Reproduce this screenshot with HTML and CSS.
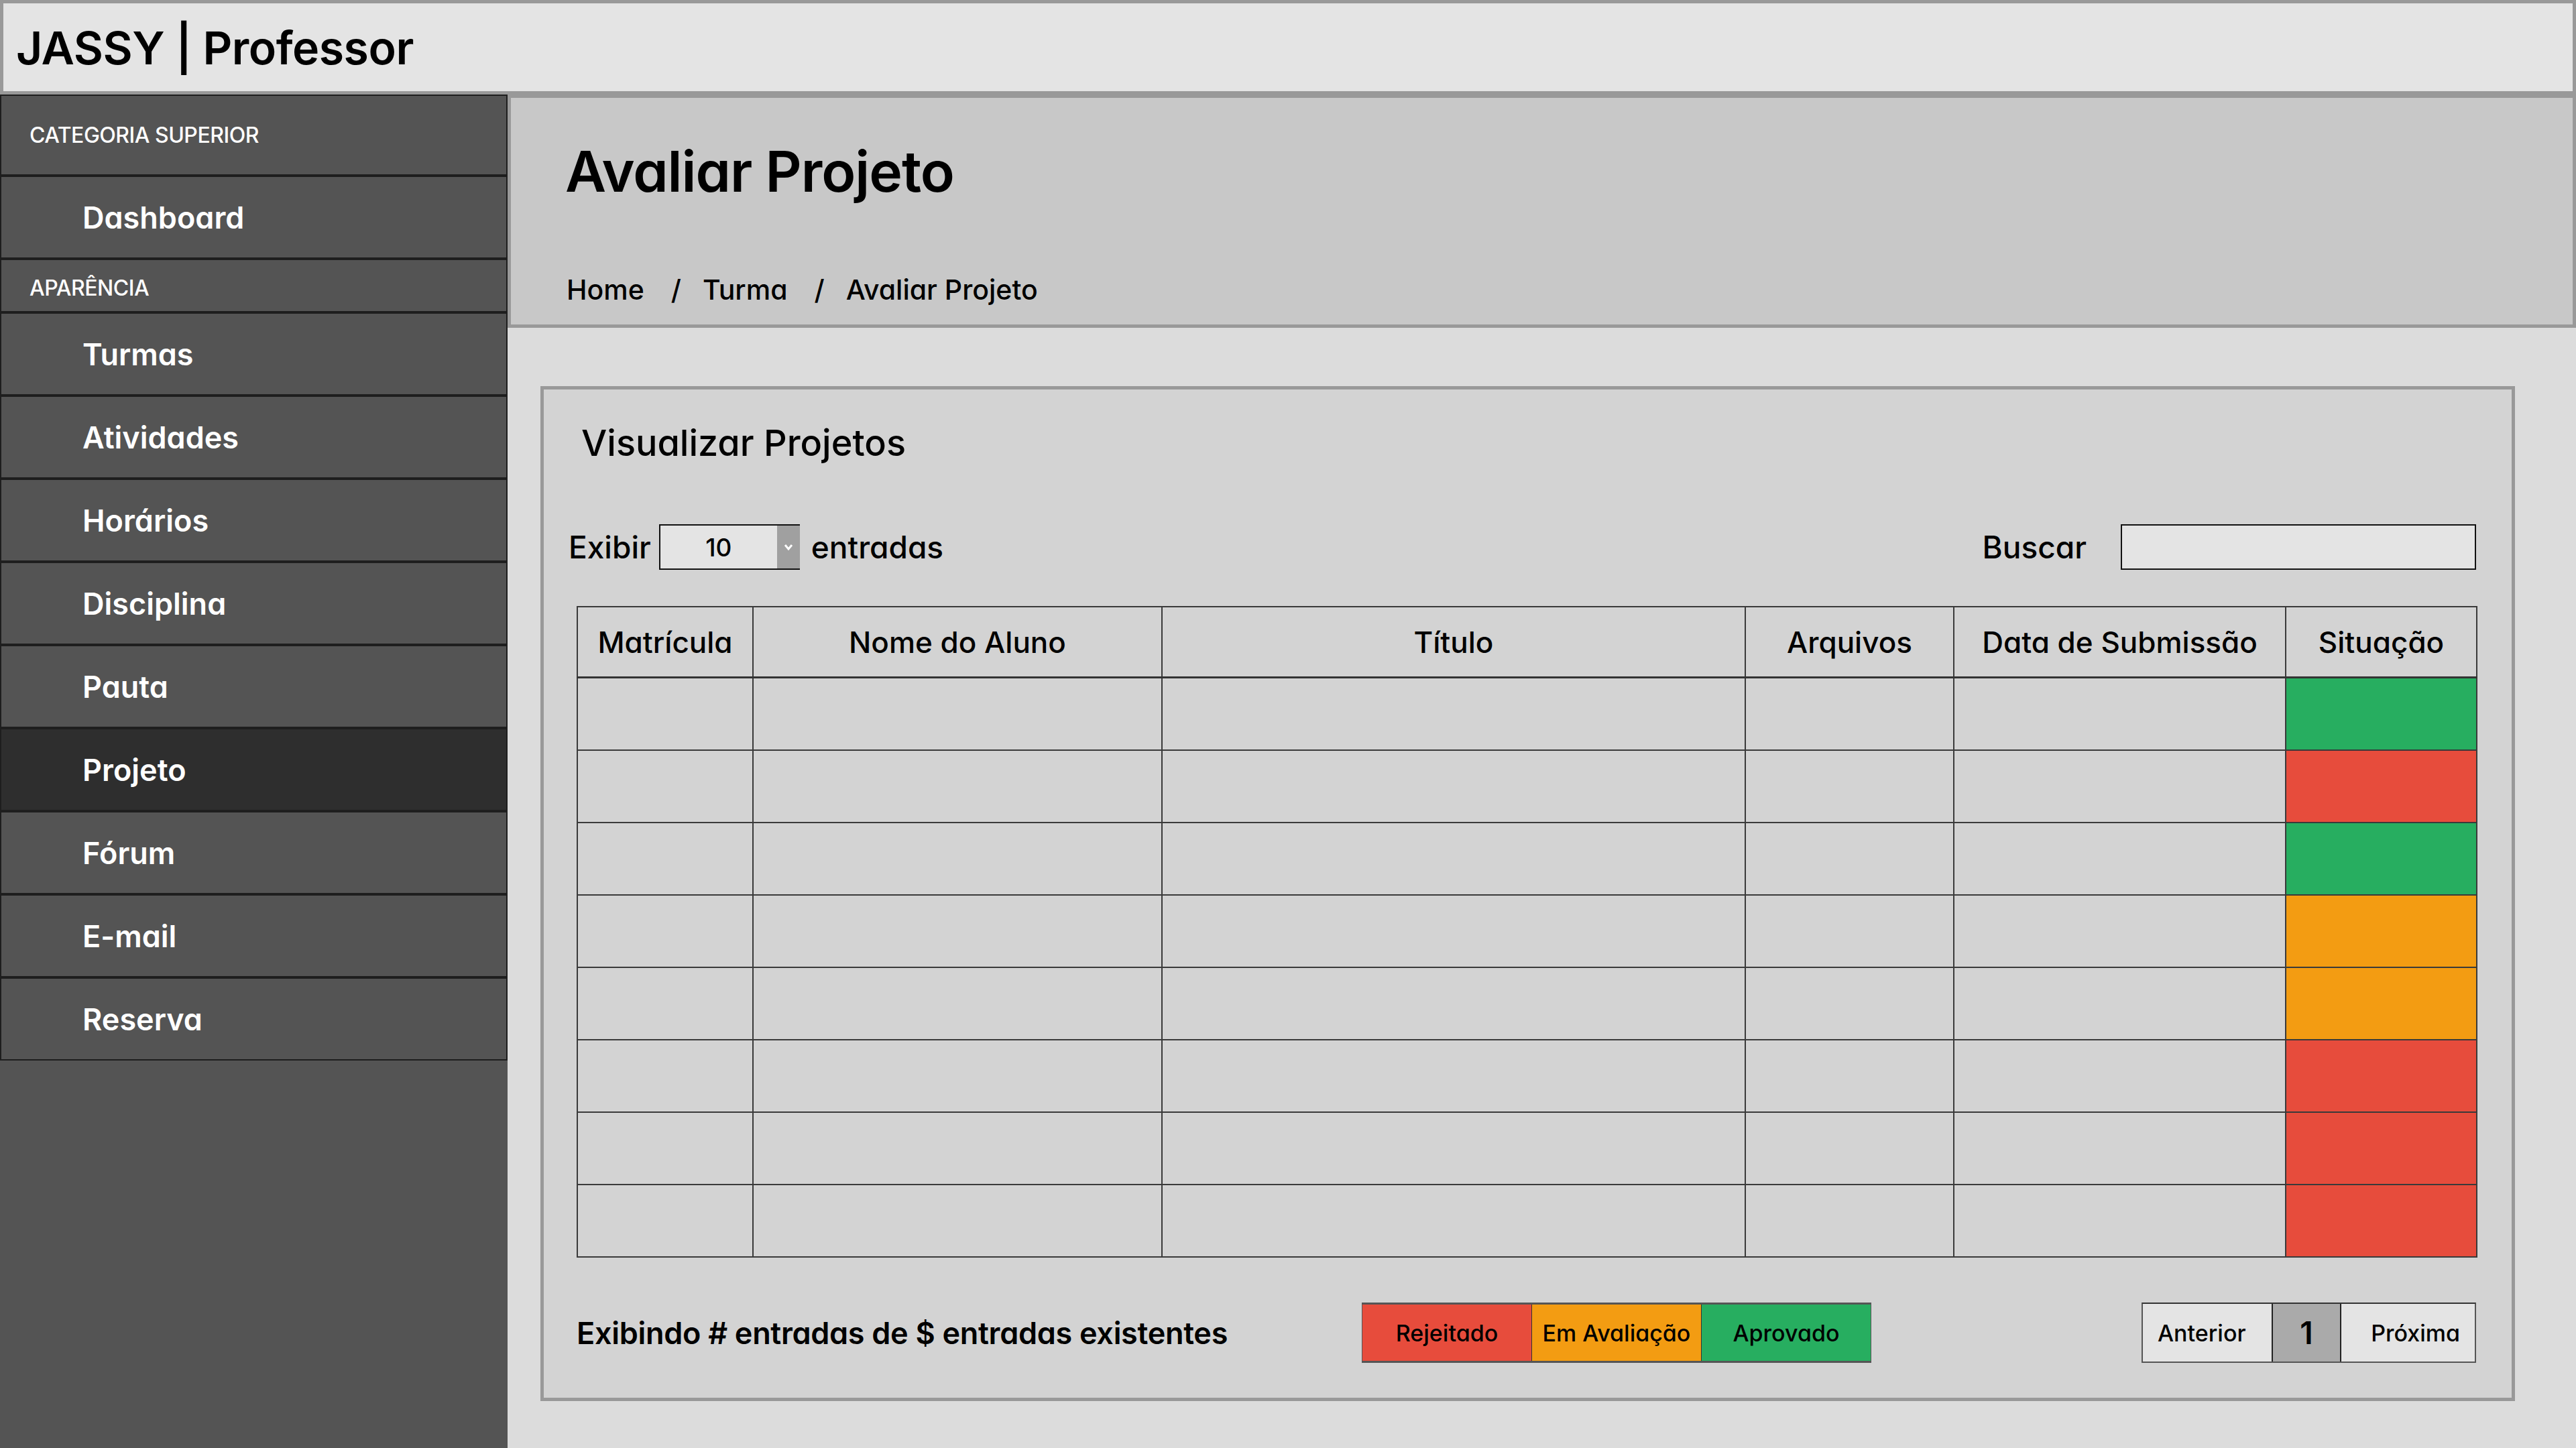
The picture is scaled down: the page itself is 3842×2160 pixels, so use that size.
FILE: index.html
```html
<!DOCTYPE html>
<html lang="pt-BR">
<head>
<meta charset="utf-8">
<title>JASSY | Professor</title>
<link rel="stylesheet" href="styles.css">
</head>
<body>
<header class="topbar"><span class="brand">JASSY | Professor</span></header>
<div class="layout">
  <nav class="sidebar">
    <div class="nav-cat nav-cat--top">CATEGORIA SUPERIOR</div>
    <a class="nav-item">Dashboard</a>
    <div class="nav-cat">APARÊNCIA</div>
    <a class="nav-item">Turmas</a>
    <a class="nav-item">Atividades</a>
    <a class="nav-item">Horários</a>
    <a class="nav-item">Disciplina</a>
    <a class="nav-item">Pauta</a>
    <a class="nav-item is-active">Projeto</a>
    <a class="nav-item">Fórum</a>
    <a class="nav-item">E-mail</a>
    <a class="nav-item">Reserva</a>
  </nav>
  <main class="main">
    <section class="page-head">
      <h1 class="page-title">Avaliar Projeto</h1>
      <ol class="crumbs">
        <li>Home</li><li class="sep">/</li><li>Turma</li><li class="sep">/</li><li>Avaliar Projeto</li>
      </ol>
    </section>
    <section class="card">
      <h2 class="card-title">Visualizar Projetos</h2>
      <div class="controls">
        <div class="show">
          <span>Exibir</span>
          <div class="select">
            <span class="select-val">10</span>
            <span class="select-btn"><svg width="14" height="12" viewBox="0 0 14 12"><path d="M2 3 L7 9 L12 3" fill="none" stroke="#fff" stroke-width="3"/></svg></span>
          </div>
          <span>entradas</span>
        </div>
        <div class="search">
          <span>Buscar</span>
          <div class="search-input"></div>
        </div>
      </div>
      <table class="grid">
        <colgroup>
          <col class="c1"><col class="c2"><col class="c3"><col class="c4"><col class="c5"><col class="c6">
        </colgroup>
        <thead>
          <tr><th>Matrícula</th><th>Nome do Aluno</th><th>Título</th><th>Arquivos</th><th>Data de Submissão</th><th>Situação</th></tr>
        </thead>
        <tbody>
          <tr><td></td><td></td><td></td><td></td><td></td><td class="st-ok"></td></tr>
          <tr><td></td><td></td><td></td><td></td><td></td><td class="st-no"></td></tr>
          <tr><td></td><td></td><td></td><td></td><td></td><td class="st-ok"></td></tr>
          <tr><td></td><td></td><td></td><td></td><td></td><td class="st-wait"></td></tr>
          <tr><td></td><td></td><td></td><td></td><td></td><td class="st-wait"></td></tr>
          <tr><td></td><td></td><td></td><td></td><td></td><td class="st-no"></td></tr>
          <tr><td></td><td></td><td></td><td></td><td></td><td class="st-no"></td></tr>
          <tr><td></td><td></td><td></td><td></td><td></td><td class="st-no"></td></tr>
        </tbody>
      </table>
      <div class="foot">
        <div class="foot-info">Exibindo # entradas de $ entradas existentes</div>
        <div class="legend">
          <span class="lg st-no">Rejeitado</span>
          <span class="lg st-wait">Em Avaliação</span>
          <span class="lg st-ok">Aprovado</span>
        </div>
        <div class="pager">
          <span class="pg pg-prev">Anterior</span>
          <span class="pg pg-num">1</span>
          <span class="pg pg-next">Próxima</span>
        </div>
      </div>
    </section>
  </main>
</div>
</body>
</html>
```
FILE: styles.css
```css
html, body {
  margin: 0;
  padding: 0;
}
body {
  width: 3842px;
  height: 2160px;
  overflow: hidden;
  background: #dcdcdc;
  font-family: Inter, "Noto Sans", "Liberation Sans", sans-serif;
  font-feature-settings: "cv11";
  color: #000;
}

/* top bar */
.topbar {
  box-sizing: border-box;
  height: 141px;
  border: 5px solid #999;
  background: #e4e4e4;
  display: flex;
  align-items: center;
  padding-left: 19px;
}
.brand {
  font-size: 68px;
  font-weight: 600;
  line-height: 1;
  letter-spacing: -0.5px;
}

/* layout */
.layout {
  display: flex;
  height: 2019px;
}

/* sidebar */
.sidebar {
  width: 757px;
  flex: none;
  background: #545454;
  display: flex;
  flex-direction: column;
}
.nav-cat,
.nav-item {
  box-sizing: border-box;
  border: 2px solid #1e1e1e;
  display: flex;
  align-items: center;
  color: #fff;
  flex: none;
}
.nav-cat {
  height: 80px;
  padding: 6px 0 0 42px;
  font-size: 32px;
  font-weight: 500;
  letter-spacing: -0.5px;
}
.nav-cat--top {
  height: 121px;
  padding-top: 0;
}
.nav-item {
  height: 124px;
  padding-left: 121px;
  font-size: 45px;
  font-weight: 600;
}
.nav-item.is-active {
  background: #2e2e2e;
}

/* main */
.main {
  flex: 1;
  display: flex;
  flex-direction: column;
}
.page-head {
  box-sizing: border-box;
  height: 348px;
  border: 5px solid #999;
  background: #c8c8c8;
  padding: 68px 0 0 81px;
}
.page-title {
  margin: 0;
  font-size: 84px;
  font-weight: 600;
  line-height: 1;
  letter-spacing: -1px;
}
.crumbs {
  list-style: none;
  margin: 114px 0 0 2px;
  padding: 0;
  display: flex;
  font-size: 41px;
  font-weight: 500;
  line-height: 1;
}
.crumbs .sep {
  margin: 0 32px 0 40px;
}

/* card */
.card {
  box-sizing: border-box;
  width: 2945px;
  height: 1514px;
  margin: 87px 0 0 49px;
  border: 5px solid #999;
  background: #d3d3d3;
  padding: 53px 53px 0 49px;
  display: flex;
  flex-direction: column;
}
.card-title {
  margin: 0 0 0 7px;
  font-size: 54px;
  font-weight: 500;
  line-height: 1;
}
.controls {
  margin: 94px 0 0 -12px;
  height: 68px;
  display: flex;
  align-items: center;
  justify-content: space-between;
  font-size: 46px;
  font-weight: 500;
}
.show,
.search {
  display: flex;
  align-items: center;
}
.select {
  box-sizing: border-box;
  width: 210px;
  height: 68px;
  border: 2px solid #111;
  border-right: none;
  display: flex;
  margin: 0 17px 0 12px;
}
.select-val {
  flex: 1;
  background: #e4e4e4;
  display: flex;
  align-items: center;
  justify-content: center;
  font-size: 37px;
}
.select-btn {
  width: 34px;
  background: #a0a0a0;
  display: flex;
  align-items: center;
  justify-content: center;
}
.search-input {
  box-sizing: border-box;
  width: 530px;
  height: 68px;
  border: 2px solid #111;
  background: #e4e4e4;
  margin-left: 51px;
}

/* table */
.grid {
  margin-top: 54px;
  width: 2833px;
  border-collapse: collapse;
  table-layout: fixed;
}
.grid .c1 { width: 262px; }
.grid .c2 { width: 610px; }
.grid .c3 { width: 870px; }
.grid .c4 { width: 311px; }
.grid .c5 { width: 495px; }
.grid .c6 { width: 285px; }
.grid th,
.grid td {
  border: 2px solid #3a3a3a;
  padding: 0;
}
.grid th {
  height: 103px;
  font-size: 44px;
  font-weight: 500;
  text-align: center;
}
.grid thead tr {
  border-bottom: 3px solid #333;
}
.grid td {
  height: 106px;
}
.st-ok { background: #27ae60; }
.st-no { background: #e74c3c; }
.st-wait { background: #f39c12; }

/* footer */
.foot {
  margin-top: 67px;
  height: 90px;
  display: flex;
  align-items: center;
}
.foot-info {
  width: 1171px;
  flex: none;
  font-size: 45px;
  font-weight: 600;
  letter-spacing: -0.3px;
}
.legend {
  display: flex;
  height: 90px;
  box-sizing: border-box;
  border-top: 3px solid #555;
  border-bottom: 3px solid #555;
}
.lg {
  width: 252px;
  display: flex;
  align-items: center;
  justify-content: center;
  font-size: 34px;
  font-weight: 500;
  border-left: 1px solid #333;
}
.lg:first-child {
  border-left: 1px solid #555;
}
.lg:last-child {
  border-right: 1px solid #555;
}
.pager {
  margin-left: auto;
  display: flex;
  height: 90px;
  box-sizing: border-box;
  border: 2px solid #555;
  border-top-color: #333;
}
.pg {
  display: flex;
  align-items: center;
  background: #e4e4e4;
  font-size: 34px;
  font-weight: 500;
}
.pg-prev {
  width: 192px;
  padding-left: 22px;
  box-sizing: border-box;
}
.pg-num {
  width: 100px;
  justify-content: center;
  background: #aaa;
  border-left: 2px solid #222;
  border-right: 2px solid #222;
  font-size: 46px;
  font-weight: 600;
}
.pg-next {
  width: 199px;
  justify-content: flex-end;
  padding-right: 22px;
  box-sizing: border-box;
}
```
